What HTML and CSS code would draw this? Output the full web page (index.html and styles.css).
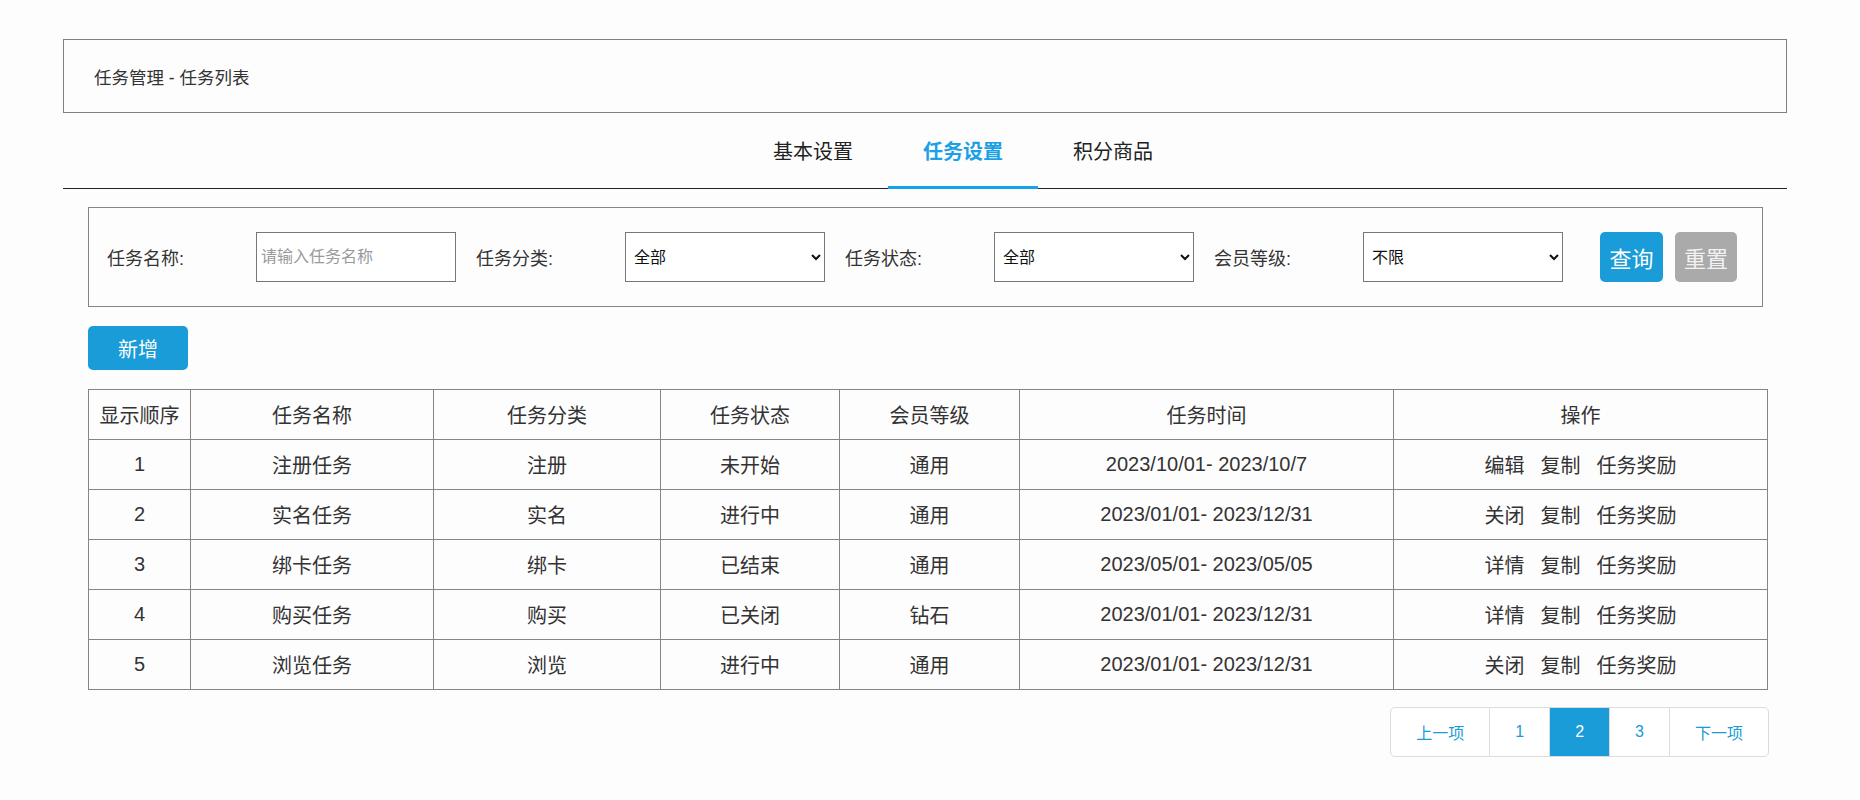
FILE: index.html
```html
<!DOCTYPE html>
<html lang="zh-CN">
<head>
<meta charset="utf-8">
<title>任务管理 - 任务列表</title>
<link rel="stylesheet" href="styles.css">
</head>
<body>
<div class="page">
  <div class="title-box">任务管理 - 任务列表</div>
  <div class="tabs">
    <div class="tab">基本设置</div>
    <div class="tab active">任务设置</div>
    <div class="tab">积分商品</div>
  </div>
  <div class="content">
    <div class="filter">
      <div class="group">
        <label class="label">任务名称:</label>
        <input class="control input" type="text" placeholder="请输入任务名称">
      </div>
      <div class="group">
        <label class="label">任务分类:</label>
        <select class="control select"><option>全部</option></select>
      </div>
      <div class="group">
        <label class="label">任务状态:</label>
        <select class="control select"><option>全部</option></select>
      </div>
      <div class="group">
        <label class="label">会员等级:</label>
        <select class="control select"><option>不限</option></select>
      </div>
      <button class="btn btn-query">查询</button>
      <button class="btn btn-reset">重置</button>
    </div>
    <button class="btn-add">新增</button>
    <table class="grid">
      <colgroup>
        <col class="c1"><col class="c2"><col class="c3"><col class="c4"><col class="c5"><col class="c6"><col class="c7">
      </colgroup>
      <thead>
        <tr><th>显示顺序</th><th>任务名称</th><th>任务分类</th><th>任务状态</th><th>会员等级</th><th>任务时间</th><th>操作</th></tr>
      </thead>
      <tbody>
        <tr><td>1</td><td>注册任务</td><td>注册</td><td>未开始</td><td>通用</td><td>2023/10/01- 2023/10/7</td><td class="ops"><a>编辑</a><a>复制</a><a>任务奖励</a></td></tr>
        <tr><td>2</td><td>实名任务</td><td>实名</td><td>进行中</td><td>通用</td><td>2023/01/01- 2023/12/31</td><td class="ops"><a>关闭</a><a>复制</a><a>任务奖励</a></td></tr>
        <tr><td>3</td><td>绑卡任务</td><td>绑卡</td><td>已结束</td><td>通用</td><td>2023/05/01- 2023/05/05</td><td class="ops"><a>详情</a><a>复制</a><a>任务奖励</a></td></tr>
        <tr><td>4</td><td>购买任务</td><td>购买</td><td>已关闭</td><td>钻石</td><td>2023/01/01- 2023/12/31</td><td class="ops"><a>详情</a><a>复制</a><a>任务奖励</a></td></tr>
        <tr><td>5</td><td>浏览任务</td><td>浏览</td><td>进行中</td><td>通用</td><td>2023/01/01- 2023/12/31</td><td class="ops"><a>关闭</a><a>复制</a><a>任务奖励</a></td></tr>
      </tbody>
    </table>
    <div class="pager-row">
      <div class="pager">
        <span class="pg">上一项</span>
        <span class="pg">1</span>
        <span class="pg active">2</span>
        <span class="pg">3</span>
        <span class="pg">下一项</span>
      </div>
    </div>
  </div>
</div>
</body>
</html>
```

FILE: styles.css
```css
* { box-sizing: border-box; }
html, body {
  margin: 0;
  padding: 0;
  background: #fefdfe;
}
body {
  font-family: "Liberation Sans", "Noto Sans CJK SC", sans-serif;
  color: #333;
}
.page {
  padding: 39px 73px 0 63px;
}
.title-box {
  height: 74px;
  border: 1px solid #808080;
  padding-left: 30px;
  display: flex;
  align-items: center;
  font-size: 17.5px;
  color: #333;
}
.tabs {
  display: flex;
  padding-left: 675px;
  border-bottom: 1px solid #222;
}
.tab {
  width: 150px;
  text-align: center;
  font-size: 20px;
  line-height: 30px;
  padding-top: 24px;
  padding-bottom: 19px;
  margin-bottom: -1px;
  border-bottom: 3px solid transparent;
  color: #222;
}
.tab.active {
  color: #1aa0e6;
  font-weight: bold;
  border-bottom-color: #14a3ea;
}
.content {
  padding: 0 20px 0 25px;
}
.filter {
  margin-top: 18px;
  margin-right: 4px;
  height: 100px;
  border: 1px solid #858585;
  padding: 0 18px;
  display: flex;
  align-items: center;
}
.group {
  display: flex;
  align-items: center;
  margin-right: 20px;
}
.label {
  width: 149px;
  font-size: 18px;
  color: #333;
}
.control {
  width: 200px;
  height: 50px;
  border: 1px solid #777;
  background: #fff;
  font-family: "Liberation Sans", "Noto Sans CJK SC", sans-serif;
  font-size: 16px;
  color: #111;
  border-radius: 0;
  outline: none;
  margin: 0;
}
.input {
  padding: 0 4px;
}
.input::placeholder {
  color: #9a9a9a;
}
.select {
  padding: 0 4px;
}
.btn {
  height: 50px;
  border: none;
  border-radius: 5px;
  color: #fff;
  font-family: "Liberation Sans", "Noto Sans CJK SC", sans-serif;
  font-size: 22px;
  padding: 0;
  cursor: pointer;
}
.btn-query {
  width: 63px;
  margin-left: 17px;
  background: #199cd8;
}
.btn-reset {
  width: 62px;
  margin-left: 12px;
  background: #aaaaaa;
  color: #f2f2f2;
}
.btn-add {
  display: block;
  margin-top: 19px;
  width: 100px;
  height: 44px;
  border: none;
  border-radius: 5px;
  background: #199cd8;
  color: #fff;
  font-family: "Liberation Sans", "Noto Sans CJK SC", sans-serif;
  font-size: 20px;
  padding: 0;
}
.grid {
  margin-top: 19px;
  width: 1679px;
  border-collapse: collapse;
  table-layout: fixed;
  font-size: 20px;
  color: #333;
}
.c1 { width: 102px; }
.c2 { width: 243px; }
.c3 { width: 227px; }
.c4 { width: 179px; }
.c5 { width: 180px; }
.c6 { width: 374px; }
.c7 { width: 374px; }
.grid th, .grid td {
  border: 1px solid #858585;
  height: 50px;
  padding: 0;
  text-align: center;
  vertical-align: middle;
  font-weight: normal;
  white-space: nowrap;
}
.ops a {
  margin: 0 8px;
  color: #333;
}
.pager-row {
  display: flex;
  justify-content: flex-end;
  margin-top: 17px;
  margin-right: -2px;
}
.pager {
  display: flex;
  height: 50px;
  border: 1px solid #dcdcdc;
  border-radius: 5px;
  overflow: hidden;
  background: #fff;
}
.pg {
  display: flex;
  align-items: center;
  padding: 0 25px;
  font-size: 16px;
  color: #1a9bd7;
  border-left: 1px solid #dcdcdc;
}
.pg:first-child { border-left: none; }
.pg.active {
  background: #199cd8;
  color: #fff;
}
```
